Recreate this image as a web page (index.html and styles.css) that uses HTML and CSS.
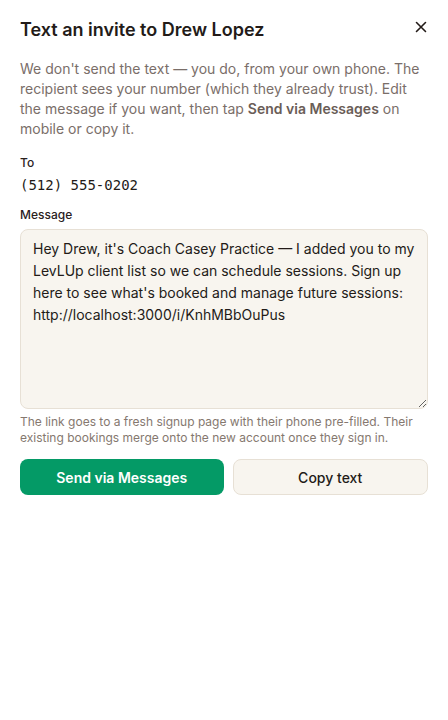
FILE: index.html
```html
<!DOCTYPE html>
<html lang="en">
<head>
  <meta charset="UTF-8" />
  <meta name="viewport" content="width=device-width, initial-scale=1" />
  <title>Text an invite</title>
  <link rel="stylesheet" href="styles.css">
</head>
<body>
  <div class="sheet">
    <div class="sheet-header">
      <h2 class="sheet-title">Text an invite to Drew Lopez</h2>
      <button class="close-btn" aria-label="Close">
        <svg width="12" height="12" viewBox="0 0 12 12" fill="none" stroke="currentColor" stroke-width="1.6" stroke-linecap="round">
          <path d="M1.5 1.5 L10.5 10.5 M10.5 1.5 L1.5 10.5" />
        </svg>
      </button>
    </div>

    <p class="intro">
      We don't send the text — you do, from your own phone. The recipient sees your number (which they already trust). Edit the message if you want, then tap <strong>Send via Messages</strong> on mobile or copy it.
    </p>

    <div class="field">
      <label class="field-label">To</label>
      <div class="phone">(512) 555-0202</div>
    </div>

    <div class="field field-message">
      <label class="field-label" for="msg">Message</label>
      <textarea id="msg" class="message">Hey Drew, it's Coach Casey Practice — I added you to my LevLUp client list so we can schedule sessions. Sign up here to see what's booked and manage future sessions: http://localhost:3000/i/KnhMBbOuPus</textarea>
      <p class="hint">The link goes to a fresh signup page with their phone pre-filled. Their existing bookings merge onto the new account once they sign in.</p>
    </div>

    <div class="actions">
      <button class="btn btn-primary">Send via Messages</button>
      <button class="btn btn-secondary">Copy text</button>
    </div>
  </div>
</body>
</html>
```

FILE: styles.css
```css
body {
  margin: 0;
  background: #ffffff;
  color: #231b18;
  font-family: Inter, 'Noto Sans', sans-serif;
}

.sheet {
  padding: 18px 20px 20px;
}

.sheet-header {
  display: flex;
  justify-content: space-between;
  align-items: flex-start;
}

.sheet-title {
  margin: 0;
  font-size: 18px;
  line-height: 24px;
  font-weight: 600;
  color: #231b18;
}

.close-btn {
  width: 14px;
  height: 14px;
  margin-top: 2px;
  padding: 0;
  border: none;
  background: none;
  color: #231b18;
  display: flex;
  align-items: center;
  justify-content: center;
  cursor: pointer;
}

.intro {
  margin: 17px 0 0;
  font-size: 14px;
  line-height: 20px;
  color: #7a6e69;
}

.intro strong {
  font-weight: 600;
  color: #6a5d57;
}

.field {
  margin-top: 16px;
}

.field-message {
  margin-top: 12px;
}

.field-label {
  display: block;
  font-size: 12px;
  line-height: 16px;
  font-weight: 500;
  color: #2a211d;
  margin-bottom: 4px;
}

.phone {
  font-family: 'DejaVu Sans Mono', 'Liberation Mono', monospace;
  font-size: 14px;
  line-height: 20px;
  color: #231b18;
}

.message {
  display: block;
  box-sizing: border-box;
  width: 100%;
  height: 180px;
  margin-top: 6px;
  padding: 8px 12px;
  font-family: Inter, 'Noto Sans', sans-serif;
  font-size: 14px;
  line-height: 22px;
  color: #231b18;
  background: #f8f5ef;
  border: 1px solid #e7e0d5;
  border-radius: 8px;
  outline: none;
}

.hint {
  margin: 5px 0 0;
  font-size: 12px;
  line-height: 16px;
  color: #85786f;
}

.actions {
  display: flex;
  gap: 9px;
  margin-top: 13px;
}

.btn {
  flex: 1 1 0;
  height: 36px;
  font-family: Inter, 'Noto Sans', sans-serif;
  font-size: 14px;
  border-radius: 8px;
  cursor: pointer;
}

.btn-primary {
  padding: 0 25px;
  background: #049a66;
  color: #ffffff;
  font-weight: 600;
  border: none;
}

.btn-secondary {
  padding: 0 20px;
  background: #f8f5ef;
  color: #231b18;
  font-weight: 500;
  border: 1px solid #e7e0d5;
}
```
